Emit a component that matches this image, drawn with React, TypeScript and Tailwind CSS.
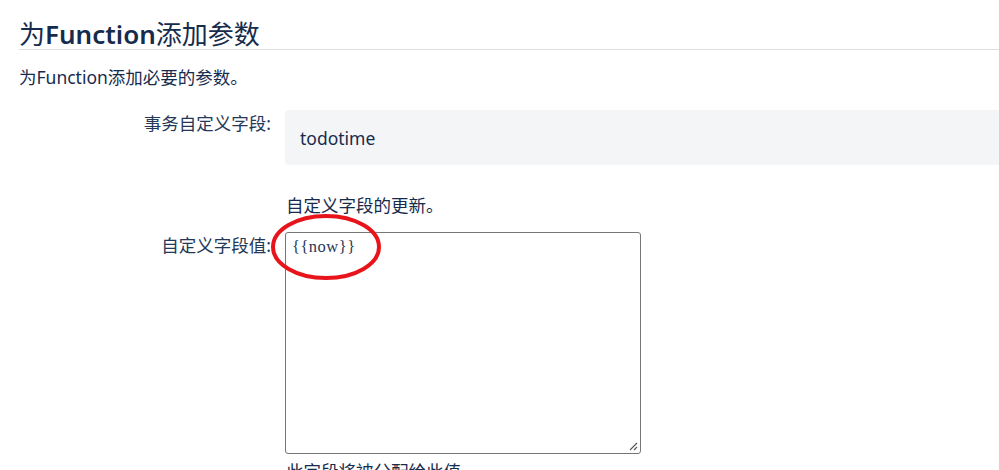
const font = "font-['Noto_Sans','Noto_Sans_CJK_SC',sans-serif]";

function FieldRow({ label, children }: { label: string; children: React.ReactNode }) {
  return (
    <div className="flex items-start">
      <label className="w-[266px] shrink-0 pr-[14px] text-right text-[17.5px] leading-[26px] text-[#253858]">
        {label}
      </label>
      <div className="min-w-0 flex-1">{children}</div>
    </div>
  );
}

function ResizeGrip() {
  return (
    <svg className="absolute bottom-[2px] right-[2px]" width="10" height="10" viewBox="0 0 10 10">
      <path d="M9 2 L2 9 M9 6 L6 9" stroke="#555" strokeWidth="1.1" />
    </svg>
  );
}

export default function App() {
  return (
    <div className={`relative h-[470px] w-[999px] overflow-hidden bg-white pl-[19px] text-[#172b4d] ${font}`}>
      <h2 className="mt-[19px] border-b border-[#dcdfe4] text-[26px] font-normal leading-[30px]">
        为<span className="font-semibold">Function</span>添加参数
      </h2>
      <p className="mt-[14px] text-[17.5px] leading-[26px]">为Function添加必要的参数。</p>

      <div className="mt-[20px]">
        <FieldRow label="事务自定义字段:">
          <div className="flex h-[55px] items-center rounded-l-[4px] bg-[#f4f5f7] pl-[15px] pt-[2px] text-[17.5px]">
            todotime
          </div>
          <p className="mt-[27px] pl-px text-[17.5px] leading-[26px]">自定义字段的更新。</p>
        </FieldRow>
      </div>

      <div className="mt-[14px]">
        <FieldRow label="自定义字段值:">
          <div className="relative h-[222px] w-[356px] rounded-[3px] border border-[#767676] bg-white pl-[6px] pt-[3px] font-['Liberation_Serif',serif] text-[16.5px] leading-[22px] tracking-[0.5px] text-[#253858]">
            {"{{now}}"}
            <ResizeGrip />
          </div>
          <p className="mt-[4px] pl-px text-[17.5px] leading-[26px]">此字段将被分配给此值。</p>
        </FieldRow>
      </div>

      <svg className="pointer-events-none absolute left-[270px] top-[212px]" width="114" height="72" viewBox="0 0 114 72">
        <ellipse cx="56" cy="35" rx="53" ry="31" fill="none" stroke="#e8141b" strokeWidth="4" />
      </svg>
    </div>
  );
}
